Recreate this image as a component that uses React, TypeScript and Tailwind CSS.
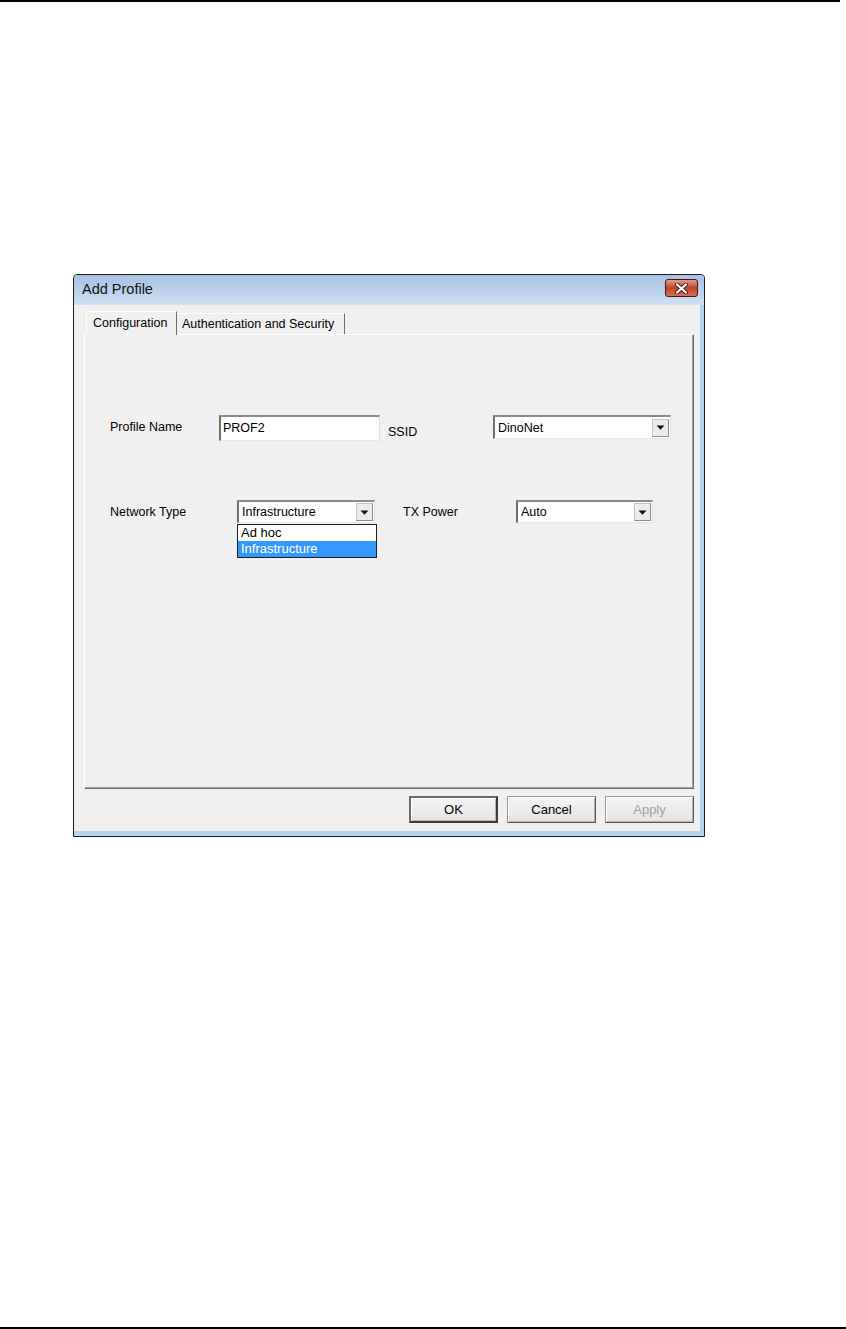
import React from 'react';

const Arrow = () => (
  <svg width="9" height="5" viewBox="0 0 9 5">
    <polygon points="0.5,0.5 8.5,0.5 4.5,4.8" fill="#111" />
  </svg>
);

interface ComboProps {
  value: string;
  className: string;
}

const Combo: React.FC<ComboProps> = ({ value, className }) => (
  <div
    className={`flex items-center bg-white border-t-2 border-l-2 border-r border-b border-t-[#8c8c8c] border-l-[#6e6e6e] border-r-[#dedede] border-b-[#e6e6e6] ${className}`}
  >
    <div className="flex-1 pl-[3px] text-[12.5px] leading-[14px] text-black truncate">{value}</div>
    <div className="w-[17px] h-[18px] mr-[1px] bg-[#ececec] border border-[#c4c4c4] border-r-[#8a8a8a] border-b-[#8a8a8a] flex items-center justify-center">
      <Arrow />
    </div>
  </div>
);

interface ButtonProps {
  label: string;
  main?: boolean;
  disabled?: boolean;
}

const DlgButton: React.FC<ButtonProps> = ({ label, main, disabled }) => (
  <div
    className={`w-[89px] h-[27px] flex items-center justify-center text-[13px] bg-gradient-to-b from-[#f4f4f4] to-[#e4e4e4] shadow-[inset_1px_1px_0_#ffffff,inset_-1px_-1px_0_#b4b4b4] ${
      main
        ? 'border-2 border-[#6a6a6a] border-r-[#3c3c3c] border-b-[#3c3c3c]'
        : 'border border-[#9a9a9a] border-r-[#555555] border-b-[#555555]'
    } ${disabled ? 'text-[#a3a3a3]' : 'text-black'}`}
  >
    {label}
  </div>
);

const App: React.FC = () => {
  return (
    <div className="w-[846px] h-[1329px] bg-white flex flex-col font-['Liberation_Sans',Arial,sans-serif]">
      <div className="h-[2px] w-[840px] bg-black" />

      {/* dialog */}
      <div className="ml-[73px] mt-[272px] w-[632px] h-[563px] border border-[#1c1c1c] rounded-t-[4px] flex flex-col bg-[#f0f0f0]">
        <div className="h-[30px] flex items-center justify-between bg-gradient-to-b from-[#a6c1e5] via-[#bad0eb] to-[#d2e1f3] rounded-t-[3px]">
          <div className="pl-[8px] text-[14.5px] text-[#111]">Add Profile</div>
          <div className="mr-[6px] mt-[-4px] w-[33px] h-[18px] rounded-[3px] border border-[#4a1410] bg-gradient-to-b from-[#e19a8b] via-[#c2402a] to-[#d6705c] flex items-center justify-center">
            <svg width="13" height="11" viewBox="0 0 13 11">
              <path d="M2 1.5 L11 9.5 M11 1.5 L2 9.5" stroke="#4a1a14" strokeWidth="4" strokeLinecap="round" />
              <path d="M2 1.5 L11 9.5 M11 1.5 L2 9.5" stroke="#ffffff" strokeWidth="2.2" strokeLinecap="round" />
            </svg>
          </div>
        </div>

        <div className="flex-1 flex flex-col pl-[10px] pt-[6px] border-r-[4px] border-b-[5px] border-r-[#b5d3ec] border-b-[#b5d3ec]">
          {/* tabs */}
          <div className="relative z-10 h-[23px] flex items-end pl-[2px] text-[12.5px] leading-[14px] text-black">
            <div className="w-[91px] h-[24px] mb-[-1px] pl-[6px] pt-[4px] bg-[#f0f0f0] border-t border-l border-t-white border-l-white border-r border-r-[#6d6d6d]">
              Configuration
            </div>
            <div className="w-[168px] h-[21px] pl-[5px] pt-[3px] border-t border-t-white border-r border-r-[#6d6d6d]">
              Authentication and Security
            </div>
          </div>

          {/* panel */}
          <div className="w-[610px] h-[455px] border-t border-l border-t-white border-l-white border-r border-b border-r-[#6f6f6f] border-b-[#6f6f6f] shadow-[inset_-1px_-1px_0_#a0a0a0] pl-[25px] pt-[80px] text-[12.5px] leading-[14px] text-black">
            <div className="flex h-[26px]">
              <div className="w-[109px] pt-[5px]">Profile Name</div>
              <div className="w-[161px] h-[26px] bg-white border-t-2 border-l-2 border-r border-b border-t-[#8c8c8c] border-l-[#6e6e6e] border-r-[#dedede] border-b-[#e6e6e6] pl-[2px] pt-[4px] text-[12.5px]">
                PROF2
              </div>
              <div className="w-[113px] pl-[8px] pt-[10px]">SSID</div>
              <Combo value="DinoNet" className="w-[178px] h-[24px]" />
            </div>

            <div className="flex mt-[59px] h-[23px]">
              <div className="w-[127px] pt-[5px]">Network Type</div>
              <div className="relative">
                <Combo value="Infrastructure" className="w-[138px] h-[23px]" />
                <div className="absolute left-0 top-[24px] w-[140px] border border-[#1e1e1e] bg-white text-[13px] leading-[16px]">
                  <div className="pl-[3px] h-[16px]">Ad hoc</div>
                  <div className="pl-[3px] h-[16px] bg-[#3399ff] text-white">Infrastructure</div>
                </div>
              </div>
              <div className="w-[141px] pl-[28px] pt-[5px]">TX Power</div>
              <Combo value="Auto" className="w-[137px] h-[23px]" />
            </div>
          </div>

          {/* buttons */}
          <div className="w-[610px] mt-[7px] flex justify-end gap-[9px]">
            <DlgButton label="OK" main />
            <DlgButton label="Cancel" />
            <DlgButton label="Apply" disabled />
          </div>
        </div>
      </div>

      <div className="flex-1" />
      <div className="h-[2px] w-full bg-black" />
    </div>
  );
};

export default App;
